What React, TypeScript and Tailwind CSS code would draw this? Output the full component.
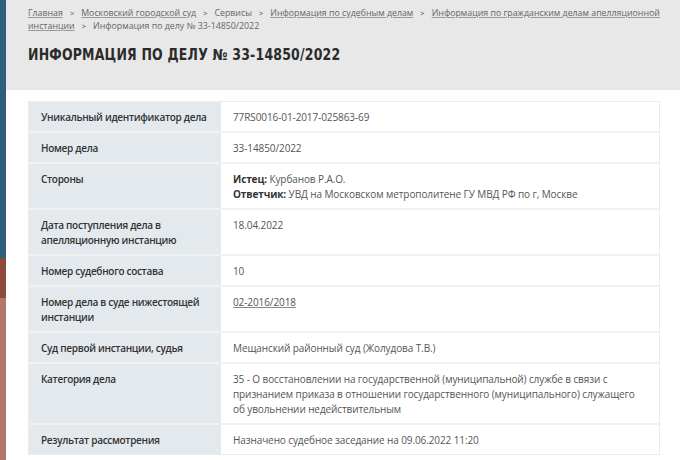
import React from 'react';

type Row = { label: string; value: React.ReactNode };

const crumbs = [
  { text: 'Главная', link: true },
  { text: 'Московский городской суд', link: true },
  { text: 'Сервисы', link: false },
  { text: 'Информация по судебным делам', link: true },
  { text: 'Информация по гражданским делам апелляционной инстанции', link: true },
  { text: 'Информация по делу № 33-14850/2022', link: false },
];

const rows: Row[] = [
  { label: 'Уникальный идентификатор дела', value: '77RS0016-01-2017-025863-69' },
  { label: 'Номер дела', value: '33-14850/2022' },
  {
    label: 'Стороны',
    value: (
      <>
        <b className="font-bold text-[#333]">Истец:</b> Курбанов Р.А.О.
        <br />
        <b className="font-bold text-[#333]">Ответчик:</b> УВД на Московском метрополитене ГУ МВД РФ по г, Москве
      </>
    ),
  },
  { label: 'Дата поступления дела в апелляционную инстанцию', value: '18.04.2022' },
  { label: 'Номер судебного состава', value: '10' },
  {
    label: 'Номер дела в суде нижестоящей инстанции',
    value: <span className="underline decoration-[#888]">02-2016/2018</span>,
  },
  { label: 'Суд первой инстанции, судья', value: 'Мещанский районный суд (Жолудова Т.В.)' },
  {
    label: 'Категория дела',
    value:
      '35 - О восстановлении на государственной (муниципальной) службе в связи с признанием приказа в отношении государственного (муниципального) служащего об увольнении недействительным',
  },
  { label: 'Результат рассмотрения', value: 'Назначено судебное заседание на 09.06.2022 11:20' },
];

export default function App() {
  return (
    <div className="flex w-[680px] h-[460px] overflow-hidden bg-white font-['Open_Sans',sans-serif]">
      {/* side stripe */}
      <div className="flex flex-col w-[6px] shrink-0">
        <div className="h-[258px] shrink-0 bg-[#2f5f7e]" />
        <div className="h-[40px] shrink-0 bg-[#8c4a3d]" />
        <div className="flex-1 bg-[#b27769]" />
      </div>

      <div className="flex-1 flex flex-col min-w-0">
        {/* header */}
        <div className="h-[90px] shrink-0 bg-[#e8e8e8] pl-[22px] pr-4 pt-[7px]">
          <div className="text-[8.8px] leading-[13px] text-[#666] w-[640px]">
            {crumbs.map((c, i) => (
              <React.Fragment key={i}>
                <span className={c.link ? 'underline decoration-[#999]' : ''}>{c.text}</span>
                {i < crumbs.length - 1 && (
                  <span className="inline-block mx-[7px] leading-none text-[#777] font-bold text-[7.5px]">&gt;</span>
                )}
              </React.Fragment>
            ))}
          </div>
          <h1 className="mt-[13px] text-[12.5px] leading-[18px] font-black tracking-[0.2px] text-[#2b2b2b] font-['DejaVu_Sans',sans-serif] origin-left scale-y-[1.2]">
            ИНФОРМАЦИЯ ПО ДЕЛУ № 33-14850/2022
          </h1>
        </div>

        {/* table */}
        <div className="shrink-0 pl-[22px] pt-[11px]">
          <div className="w-[632px] border border-[#ececec] text-[10px] leading-[15px]">
            {rows.map((r, i) => (
              <div key={i} className="flex border-b-[2px] border-[#f1f1f1] last:border-b-0">
                <div className="w-[192px] shrink-0 bg-[#e4e9ee] pl-3 pr-2 pt-2 pb-[6px] font-semibold tracking-[-0.3px] text-[#333]">
                  {r.label}
                </div>
                <div className="flex-1 pl-3 pr-[24px] pt-2 pb-[6px] tracking-[-0.1px] text-[#555]">{r.value}</div>
              </div>
            ))}
          </div>
        </div>
      </div>
    </div>
  );
}
